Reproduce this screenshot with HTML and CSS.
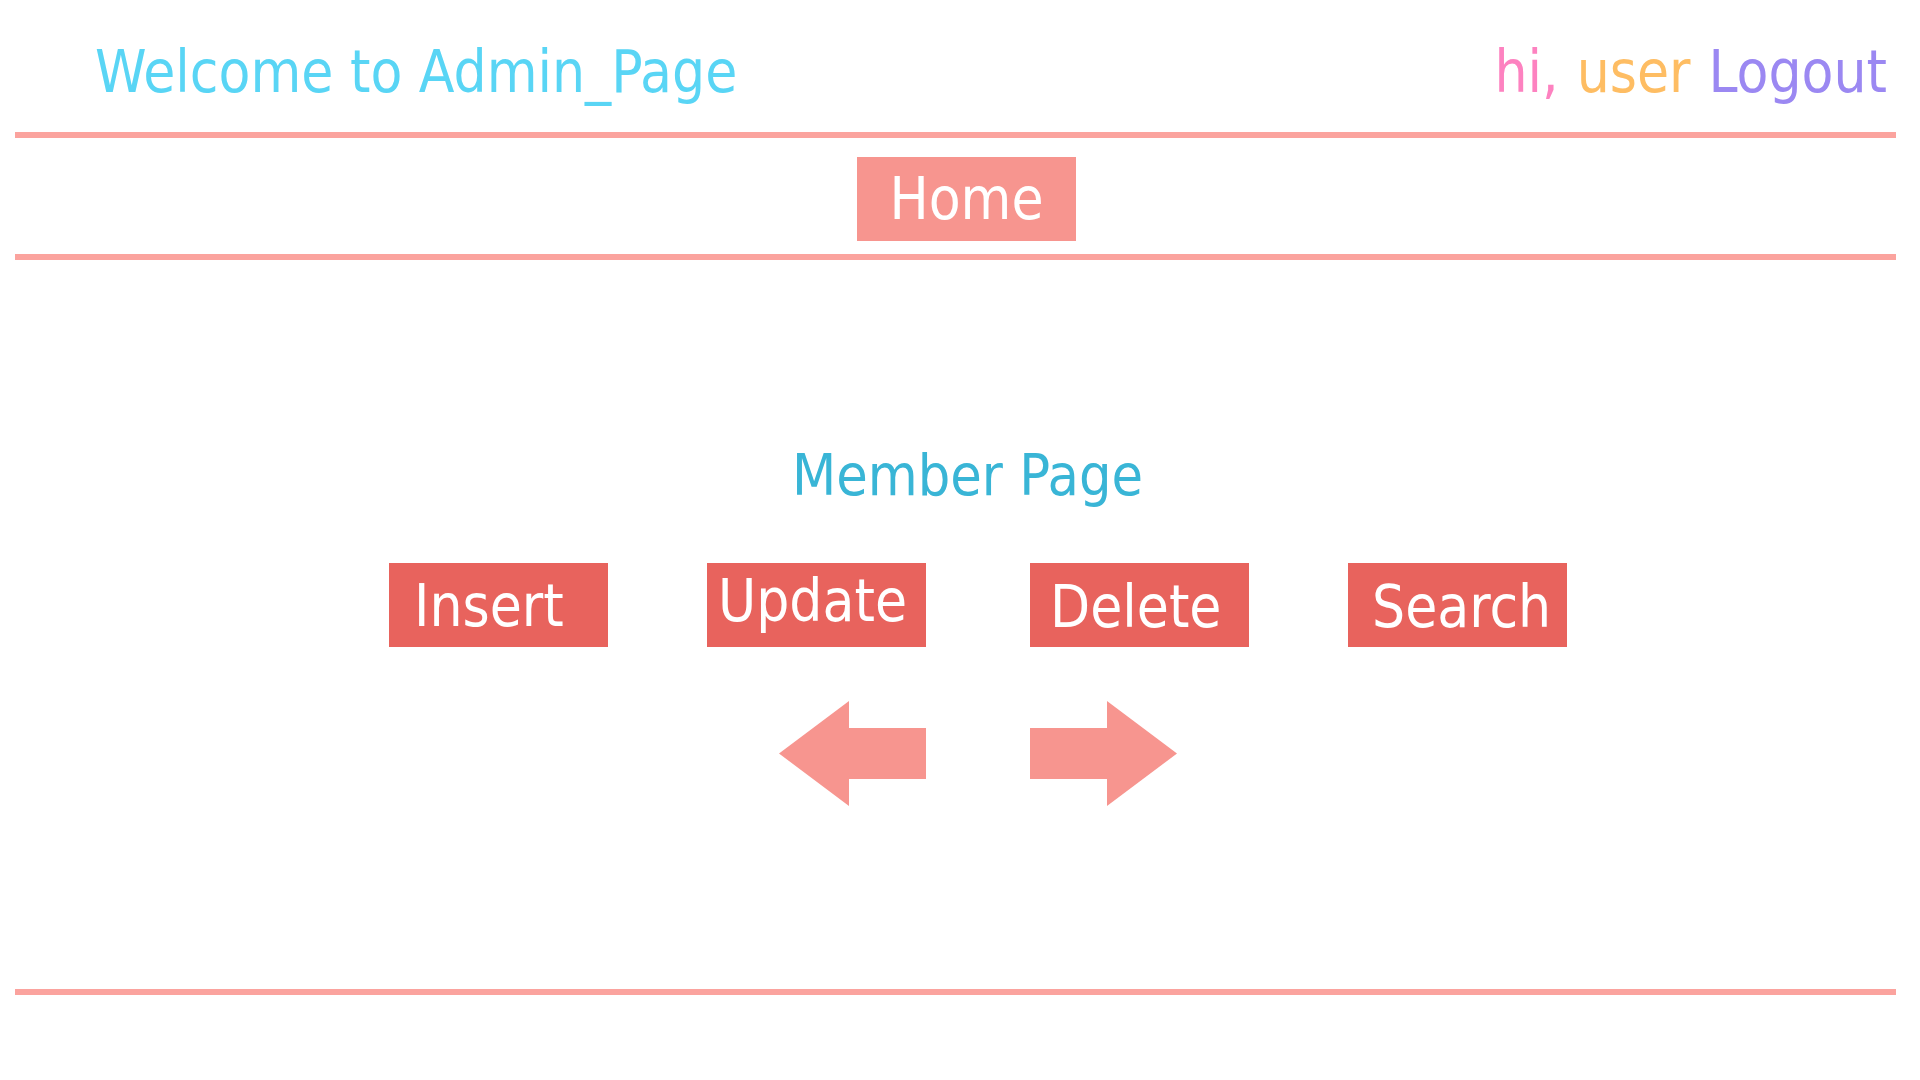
FILE: index.html
```html
<!DOCTYPE html>
<html lang="en">
<head>
<meta charset="utf-8">
<title>Admin Page</title>
<link rel="stylesheet" href="styles.css">
</head>
<body>
<div class="page">
  <header class="topbar">
    <h1 class="welcome">Welcome to Admin_Page</h1>
    <div class="user-box">
      <span class="hi">hi,</span>
      <span class="user">user</span>
      <a class="logout" href="#">Logout</a>
    </div>
  </header>
  <nav class="nav">
    <a class="home-btn" href="#">Home</a>
  </nav>
  <main class="main">
    <h2 class="title">Member Page</h2>
    <div class="controls">
      <div class="half half-left">
        <div class="btn-row">
          <a class="btn btn-insert" href="#">Insert</a>
          <a class="btn btn-update" href="#">Update</a>
        </div>
        <div class="arrow-row">
          <a class="arrow" href="#" aria-label="Previous">
            <svg width="147" height="105" viewBox="0 0 147 105"><polygon points="0,52.5 70,0 70,27 147,27 147,78 70,78 70,105" fill="#f7958f"/></svg>
          </a>
        </div>
      </div>
      <div class="half half-right">
        <div class="btn-row">
          <a class="btn btn-delete" href="#">Delete</a>
          <a class="btn btn-search" href="#">Search</a>
        </div>
        <div class="arrow-row">
          <a class="arrow" href="#" aria-label="Next">
            <svg width="147" height="105" viewBox="0 0 147 105"><polygon points="0,27 77,27 77,0 147,52.5 77,105 77,78 0,78" fill="#f7958f"/></svg>
          </a>
        </div>
      </div>
    </div>
  </main>
</div>
</body>
</html>
```
FILE: styles.css
```css
html, body {
  margin: 0;
  padding: 0;
  background: #ffffff;
}
body {
  font-family: "DejaVu Sans Condensed", "DejaVu Sans", sans-serif;
  font-stretch: condensed;
}
a { text-decoration: none; }
.page {
  margin: 0 24px 0 15px;
}
.topbar {
  height: 132px;
  box-sizing: content-box;
  border-bottom: 6px solid #fba39e;
  display: flex;
  justify-content: space-between;
  align-items: flex-start;
  padding: 0 9px 0 80px;
}
.welcome {
  margin: 43px 0 0;
  font-weight: normal;
  font-size: 58px;
  line-height: 58px;
  color: #59d5f5;
}
.user-box {
  margin-top: 43px;
  font-size: 58px;
  line-height: 58px;
  display: flex;
  gap: 18px;
}
.hi { color: #fd82c0; }
.user { color: #febd63; }
.logout { color: #9b88f2; }
.nav {
  display: flex;
  justify-content: center;
  padding: 19px 0 13px 22px;
  border-bottom: 6px solid #fba39e;
}
.home-btn {
  display: block;
  width: 219px;
  height: 84px;
  box-sizing: border-box;
  padding-top: 13px;
  background: #f7958f;
  color: #ffffff;
  font-size: 58px;
  line-height: 58px;
  text-align: center;
}
.main {
  padding: 186px 0 0;
  height: 543px;
  box-sizing: content-box;
  border-bottom: 6px solid #fba39e;
}
.title {
  margin: 0;
  padding-left: 24px;
  text-align: center;
  font-weight: normal;
  font-size: 57px;
  line-height: 58px;
  color: #39b5d6;
}
.controls {
  display: flex;
  justify-content: center;
  gap: 104px;
  padding-left: 45px;
  margin-top: 59px;
}
.half {
  width: 537px;
  display: flex;
  flex-direction: column;
  gap: 54px;
}
.btn-row {
  display: flex;
  gap: 99px;
}
.btn {
  display: block;
  width: 219px;
  height: 84px;
  box-sizing: border-box;
  background: #e8635d;
  color: #ffffff;
  font-size: 58px;
  line-height: 58px;
  white-space: nowrap;
}
.btn-insert { padding: 14px 0 0 25px; }
.btn-update { padding: 9px 0 0 11px; }
.btn-delete { padding: 15px 0 0 20px; }
.btn-search { padding: 15px 0 0 24px; }
.arrow-row {
  display: flex;
}
.half-left .arrow-row { justify-content: flex-end; }
.half-right .arrow-row { justify-content: flex-start; }
.arrow {
  display: block;
  width: 147px;
  height: 105px;
}
.arrow svg { display: block; }
```
